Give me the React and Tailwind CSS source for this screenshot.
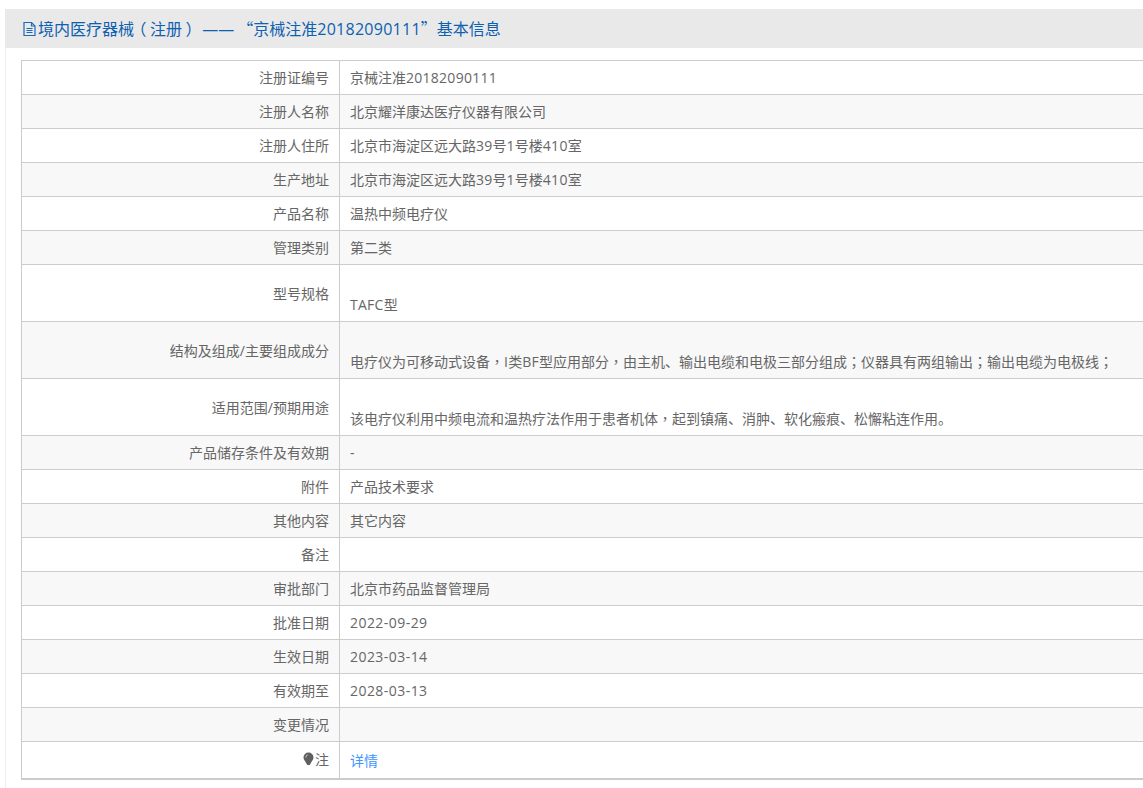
import React from 'react';

const rows = [
  ['注册证编号', '京械注准20182090111'],
  ['注册人名称', '北京耀洋康达医疗仪器有限公司'],
  ['注册人住所', '北京市海淀区远大路39号1号楼410室'],
  ['生产地址', '北京市海淀区远大路39号1号楼410室'],
  ['产品名称', '温热中频电疗仪'],
  ['管理类别', '第二类'],
  ['型号规格', 'TAFC型', true],
  ['结构及组成/主要组成成分', '电疗仪为可移动式设备，I类BF型应用部分，由主机、输出电缆和电极三部分组成；仪器具有两组输出；输出电缆为电极线；', true],
  ['适用范围/预期用途', '该电疗仪利用中频电流和温热疗法作用于患者机体，起到镇痛、消肿、软化瘢痕、松懈粘连作用。', true],
  ['产品储存条件及有效期', '-'],
  ['附件', '产品技术要求'],
  ['其他内容', '其它内容'],
  ['备注', ''],
  ['审批部门', '北京市药品监督管理局'],
  ['批准日期', '2022-09-29'],
  ['生效日期', '2023-03-14'],
  ['有效期至', '2028-03-13'],
  ['变更情况', ''],
];

// centred full-width punctuation comes from the TC face, quotes and 、。 from SC
const Txt = ({ children }) =>
  children
    .split(/([，；（）“”、。]|[0-9A-Za-z-]+)/)
    .filter(Boolean)
    .map((part, i) => {
      if (/^[（）]$/.test(part)) return <span key={i} className="font-['Noto_Sans_CJK_SC'] [font-feature-settings:'palt'] inline-block w-4 text-center">{part}</span>;
      if (/^[，；]$/.test(part)) return <span key={i} className="font-['Noto_Sans_CJK_TC']">{part}</span>;
      if (part === '“') return <span key={i} className="font-['Noto_Sans_CJK_SC'] ml-[3px]">{part}</span>;
      if (/^[”、。]$/.test(part)) return <span key={i} className="font-['Noto_Sans_CJK_SC']">{part}</span>;
      if (/^\d+-\d+-\d+$/.test(part)) return <span key={i} className="tracking-[0.45px]">{part}</span>;
      if (/^[0-9A-Za-z-]+$/.test(part)) return <span key={i} className="tracking-[0.27px]">{part}</span>;
      return part;
    });

export default function App() {
  return (
    <div className="h-[788px] overflow-hidden bg-white pt-[9px] pl-[5px] text-[14px] text-[#666] font-['Open_Sans','Noto_Sans_CJK_SC',sans-serif]">
      {/* Title bar */}
      <div className="h-[39px] bg-[#e9e9e9] pl-[17px] flex items-center text-[16px] text-[#0e60b0]">
        <svg width="15" height="16" viewBox="0 0 15 16" fill="none" stroke="#1f6ab5" strokeWidth="1.2" className="mr-px">
          <path d="M2 1.500h7.500l3.500 3.500v9.500H2z" />
          <path d="M9.500 1.500v3.500H13M4.500 7.500h6M4.500 9.500h6M4.500 11.500h6" />
        </svg>
        <span className="whitespace-pre"><Txt>{'境内医疗器械（注册） ——“京械注准20182090111”基本信息'}</Txt></span>
      </div>

      <div className="border-l border-[#eeeeee] pl-[15px] pt-3 h-[740px]">
        <table className="w-[1200px] table-fixed border-collapse">
          <tbody>
            {rows.map(([label, value, tall], i) => (
              <tr key={label} className={`${tall ? 'h-[57px]' : 'h-[34px]'} ${i % 2 === 1 ? 'bg-[#f8f8f8]' : 'bg-white'}`}>
                <td className="w-[318px] border border-[#cccccc] pr-[10px] text-right"><Txt>{label}</Txt></td>
                <td className="border border-[#cccccc] pl-[10px] text-left">
                  {tall && <div className="h-[23px]" />}
                  <Txt>{value}</Txt>
                </td>
              </tr>
            ))}
            <tr className="h-[37px] bg-white">
              <td className="w-[318px] border border-[#cccccc] border-b-2 pr-[10px] text-right">
                <span className="inline-flex items-center justify-end">
                  <svg width="12" height="14" viewBox="0 0 12 14">
                    <path d="M5.500 0.500a5 5 0 0 0-5 5c0 2.300 1.700 3.500 2.600 5.500l1.200 2h2.400l1.200-2c.9-2 2.600-3.200 2.600-5.500a5 5 0 0 0-5-5z" fill="#5f5f5f" />
                    <path d="M2.800 5.500a2.700 2.700 0 0 1 2-2.700" fill="none" stroke="#c4c4c4" strokeWidth="1" />
                  </svg>
                  注
                </span>
              </td>
              <td className="border border-[#cccccc] border-b-2 pl-[10px] pt-px text-left">
                <a className="text-[#3f96ff]">详情</a>
              </td>
            </tr>
          </tbody>
        </table>
      </div>
    </div>
  );
}
